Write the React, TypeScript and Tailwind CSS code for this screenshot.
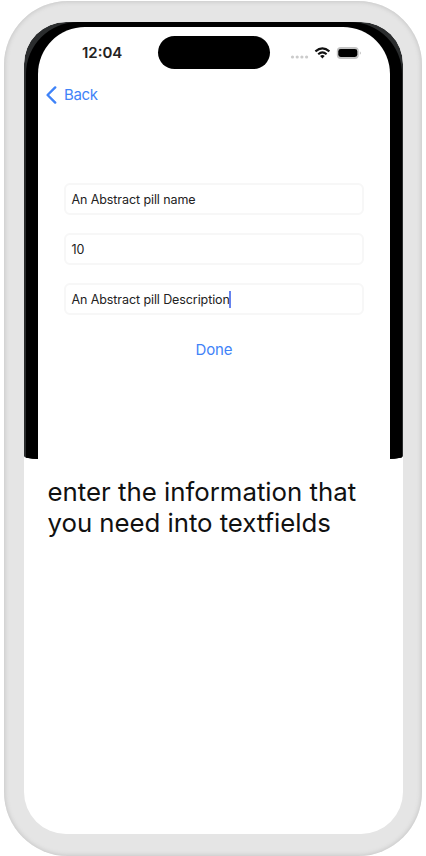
import React from "react";

function StatusBar() {
  return (
    <div className="flex h-[33px] mt-[9px] items-center">
      <span className="ml-[44px] w-[76px] pt-px text-[15px] leading-[18px] font-semibold text-[#222]">12:04</span>
      <div className="h-[33px] w-[112px] rounded-full bg-black" />
      <svg className="ml-[20px]" width="72" height="18" viewBox="0 0 72 18" fill="none">
        <g fill="#cbcbcb">
          <circle cx="2.5" cy="13" r="1.6" />
          <circle cx="7.2" cy="13" r="1.6" />
          <circle cx="11.9" cy="13" r="1.6" />
          <circle cx="16.6" cy="13" r="1.6" />
        </g>
        <g stroke="#111" strokeWidth="2.1">
          <path d="M25.4 7.4Q32.4 1.4 39.4 7.4" />
          <path d="M28.2 10.2Q32.4 6.6 36.6 10.2" />
        </g>
        <path d="M30.1 12Q32.4 10.2 34.7 12L32.4 14.4Z" fill="#111" />
        <rect x="46.8" y="3" width="22" height="12" rx="4" fill="#c4c4c4" />
        <rect x="48.3" y="5" width="19" height="8" rx="2.4" fill="#000" />
        <path d="M69.8 7.2Q72 9 69.8 10.8Z" fill="#bbb" />
      </svg>
    </div>
  );
}

function Field({ value, caret = false }: { value: string; caret?: boolean }) {
  return (
    <div className="flex h-[32px] w-[300px] items-center rounded-[6px] border-[2px] border-[#f7f7f7] bg-white pl-[5.5px] text-[12.5px] tracking-[-0.09px] text-[#222]">
      <span className="pt-[2px]">{value}</span>
      {caret && <span className="-ml-px h-[17px] w-[2px] bg-[#6683ef]" />}
    </div>
  );
}

export default function App() {
  return (
    <div className="h-[856px] w-[426px] overflow-hidden bg-white pl-[4px] pt-px font-['Inter',sans-serif]">
      <div className="h-[855px] w-[418px] rounded-[64px] bg-[#e5e5e5] pl-[20px] pt-[21px] shadow-[inset_0_0_4px_1px_#c8c8c8]">
        <div className="h-[812px] w-[379px] overflow-hidden rounded-[42px] bg-white">
          <div className="h-[437px] overflow-hidden rounded-t-[42px] rounded-b-[14px_3px] bg-[#2b2d2e] pl-[2px] pr-px">
            <div className="h-[437px] rounded-t-[52px] bg-black pl-[12px] pr-[13px] pt-[5px]">
              <div className="h-[432px] w-[352px] overflow-hidden rounded-t-[47px] bg-white">
                <StatusBar />
                <div className="mt-[16px] flex h-[20px] items-center pl-[8px] text-[15px] tracking-[-0.35px] text-[#3f83f8]">
                  <svg width="11" height="18" viewBox="0 0 11 18" fill="none" stroke="currentColor" strokeWidth="2.4" strokeLinecap="round" strokeLinejoin="round">
                    <path d="M9.2 1.4L1.6 9L9.2 16.6" />
                  </svg>
                  <span className="ml-[7px] pt-px">Back</span>
                </div>
                <div className="mt-[78px] flex flex-col gap-[18px] pl-[26px]">
                  <Field value="An Abstract pill name" />
                  <Field value="10" />
                  <Field value="An Abstract pill Description" caret />
                </div>
                <div className="mt-[25px] text-center text-[15px] leading-[20px] tracking-[-0.1px] text-[#3f83f8]">Done</div>
              </div>
            </div>
          </div>
          <p className="ml-[23.5px] mt-[17px] text-[25.8px] leading-[31px] text-[#111]">
            enter the information that
            <br />
            <span className="tracking-[-0.04px]">you need into textfields</span>
          </p>
        </div>
      </div>
    </div>
  );
}
